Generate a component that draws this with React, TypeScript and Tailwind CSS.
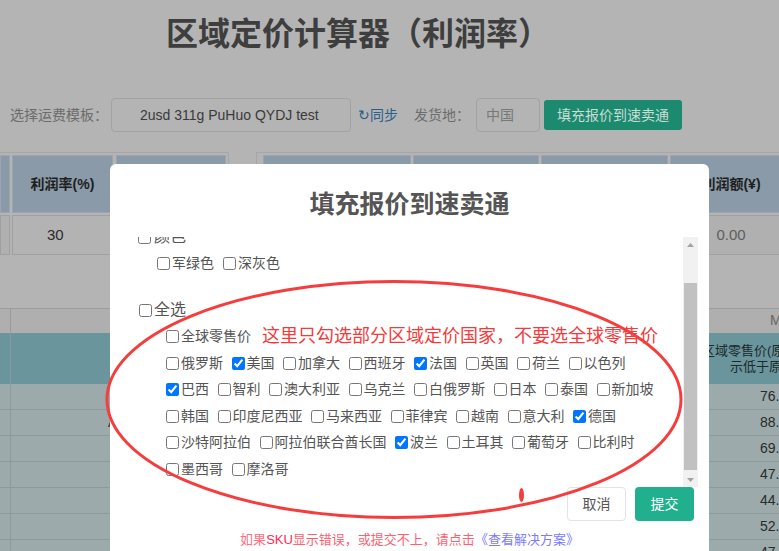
import React from "react";

type C = [string, boolean];

const rows: C[][] = [
  [["俄罗斯", false], ["美国", true], ["加拿大", false], ["西班牙", false], ["法国", true], ["英国", false], ["荷兰", false], ["以色列", false]],
  [["巴西", true], ["智利", false], ["澳大利亚", false], ["乌克兰", false], ["白俄罗斯", false], ["日本", false], ["泰国", false], ["新加坡", false]],
  [["韩国", false], ["印度尼西亚", false], ["马来西亚", false], ["菲律宾", false], ["越南", false], ["意大利", false], ["德国", true]],
  [["沙特阿拉伯", false], ["阿拉伯联合酋长国", false], ["波兰", true], ["土耳其", false], ["葡萄牙", false], ["比利时", false]],
  [["墨西哥", false], ["摩洛哥", false]],
];

const values = ["76.", "88.", "69.", "47.", "44.", "52.", "47."];

function Box({ checked }: { checked?: boolean }) {
  return <input type="checkbox" defaultChecked={checked} className="m-0 h-[13px] w-[13px] shrink-0" />;
}

function Item({ label, checked }: { label: string; checked?: boolean }) {
  return (
    <label className="flex items-center">
      <Box checked={checked} />
      <span className="ml-[2px]">{label}</span>
    </label>
  );
}

export default function App() {
  return (
    <div className="relative h-[551px] w-[779px] overflow-hidden bg-[#b4b4b4] font-['Liberation_Sans','Noto_Sans_CJK_SC',sans-serif]">
      {/* page title */}
      <div className="pl-[166px] pt-[18px] text-[32px] font-bold leading-[32px] text-[#3e3e3e]">区域定价计算器（利润率）</div>

      {/* controls */}
      <div className="mt-[48px] flex h-[34px] items-center pl-[10px] text-[14px]">
        <span className="w-[101px] text-[#6c6c6c]">选择运费模板：</span>
        <div className="flex h-[34px] w-[240px] items-center rounded-[4px] border border-[#a2a2a2] pl-[28px] text-[#3a3a3a]">2usd 311g PuHuo QYDJ test</div>
        <span className="ml-[7px] text-[#2b5d8b]">↻同步</span>
        <span className="ml-[16px] text-[#6c6c6c]">发货地：</span>
        <div className="ml-[6px] flex h-[34px] w-[64px] items-center rounded-[4px] border border-[#a2a2a2] pl-[9px] text-[#787878]">中国</div>
        <div className="ml-[4px] flex h-[30px] w-[138px] items-center justify-center rounded-[3px] bg-[#1b8a6f] text-[#c9dcd5]">填充报价到速卖通</div>
      </div>

      {/* tables */}
      <div className="mt-[20px] flex h-[104px]">
        <div className="w-[229px] shrink-0 border-r border-t border-[#a6a6a6] pt-[2px]">
          <div className="flex h-[58px]">
            <div className="w-[10px] border border-[#9ba5ae] bg-[#8a9aa8]" />
            <div className="ml-[2px] flex w-[101px] items-center justify-center border border-[#9ba5ae] bg-[#8a9aa8] text-[14px] font-bold text-[#1e1e1e]">利润率(%)</div>
            <div className="ml-[3px] w-[110px] border border-[#9ba5ae] bg-[#8a9aa8]" />
          </div>
          <div className="mt-[2px] flex h-[40px]">
            <div className="w-[10px] border border-[#a0a0a0] bg-[#b0b0b0]" />
            <div className="ml-[2px] flex w-[101px] items-center border border-[#a0a0a0] bg-[#b3b3b3] pl-[34px] text-[15px] text-[#2a2a2a]">30</div>
            <div className="ml-[3px] w-[110px] border border-[#a0a0a0] bg-[#b0b0b0]" />
          </div>
        </div>
        <div className="ml-[27px] w-[600px] shrink-0 border-l border-t border-[#a6a6a6] pl-[6px] pt-[2px]">
          <div className="flex h-[58px] gap-[2px]">
            <div className="w-[148px] border border-[#9ba5ae] bg-[#8a9aa8]" />
            <div className="w-[126px] border border-[#9ba5ae] bg-[#8a9aa8]" />
            <div className="w-[127px] border border-[#9ba5ae] bg-[#8a9aa8]" />
            <div className="flex w-[122px] items-center justify-center border border-[#9ba5ae] bg-[#8a9aa8] text-[14px] font-bold text-[#1e1e1e]">利润额(¥)</div>
          </div>
          <div className="mt-[2px] flex h-[40px] gap-[2px]">
            <div className="w-[148px] border border-[#a0a0a0] bg-[#b0b0b0]" />
            <div className="w-[126px] border border-[#a0a0a0] bg-[#b0b0b0]" />
            <div className="w-[127px] border border-[#a0a0a0] bg-[#b0b0b0]" />
            <div className="flex w-[122px] items-center justify-center border border-[#a0a0a0] bg-[#b0b0b0] text-[15px] text-[#5e5e5e]">0.00</div>
          </div>
        </div>
      </div>

      {/* lower table */}
      <div className="mt-[52px]">
        <div className="grid h-[25px] grid-cols-[10px_690px_200px] border-t border-[#9c9c9c] bg-[#afafaf]">
          <div />
          <div className="border-l border-[#999999]" />
          <div className="pl-[70px] text-[14px] leading-[22px] text-[#666666]">M</div>
        </div>
        <div className="grid h-[51px] grid-cols-[10px_690px_200px] bg-[#6a959c]">
          <div />
          <div className="border-l border-[#8a9a9c]" />
          <div className="flex flex-col justify-center text-[13px] leading-[16px] text-[#1b2a2c]">
            <span className="pl-[2px]">区域零售价(原始</span>
            <span className="pl-[30px]">示低于原价</span>
          </div>
        </div>
        {values.map((v, i) => (
          <div key={i} className="grid h-[26px] grid-cols-[10px_690px_200px] border-b border-[#8e999a] bg-[#9caaab]">
            <div />
            <div className="border-l border-[#8e999a] pl-[97px] text-[13px] leading-[25px] text-[#222222]">{i === 1 ? "A" : ""}</div>
            <div className="pl-[60px] text-[14px] leading-[25px] text-[#2a2a2a]">{v}</div>
          </div>
        ))}
      </div>

      {/* modal */}
      <div className="absolute left-[110px] top-[164px] h-[420px] w-[599px] rounded-[6px] bg-white">
        <div className="h-[73px] pt-[28px] text-center text-[25px] font-bold leading-[25px] text-[#555555]">填充报价到速卖通</div>

        <div className="ml-[20px] flex h-[250px] w-[568px]">
          <div className="flex-1 overflow-hidden text-[#555555]">
            <div className="-mt-[13px]">
              <div className="flex h-[26px] items-center pl-[8px] text-[16px]">
                <Box />
                <span className="ml-[3px]">颜色</span>
              </div>
              <div className="flex h-[26px] items-center gap-x-[9px] pl-[27px] text-[14px]">
                <Item label="军绿色" />
                <Item label="深灰色" />
              </div>
              <div className="mt-[21px] flex h-[26.5px] items-center pl-[9px] text-[16px]">
                <Box />
                <span className="ml-[2px]">全选</span>
              </div>
              <div className="flex h-[26.5px] items-center pl-[36px] text-[14px]">
                <Item label="全球零售价" />
                <span className="ml-[11px] text-[18px] text-[#f23b3b]">这里只勾选部分区域定价国家，不要选全球零售价</span>
              </div>
              {rows.map((r, i) => (
                <div key={i} className="flex h-[26.5px] items-center gap-x-[8.5px] pl-[36px] text-[14px]">
                  {r.map(([l, c]) => (
                    <Item key={l} label={l} checked={c} />
                  ))}
                </div>
              ))}
            </div>
          </div>
          {/* scrollbar */}
          <div className="flex w-[15px] flex-col bg-[#f1f1f1]">
            <div className="flex h-[16px] items-center justify-center">
              <svg width="7" height="4" viewBox="0 0 7 4"><path d="M3.5 0L7 4H0z" fill="#a3a3a3" /></svg>
            </div>
            <div className="h-[30px]" />
            <div className="mx-[1px] h-[187px] bg-[#c1c1c1]" />
            <div className="flex-1" />
            <div className="flex h-[15px] items-center justify-center">
              <svg width="7" height="4" viewBox="0 0 7 4"><path d="M0 0H7L3.5 4z" fill="#a3a3a3" /></svg>
            </div>
          </div>
        </div>

        <div className="flex justify-end gap-[9px] pr-[15px]">
          <div className="flex h-[34px] w-[59px] items-center justify-center rounded-[4px] border border-[#e3e3e3] bg-white text-[14px] text-[#555555]">取消</div>
          <div className="flex h-[34px] w-[59px] items-center justify-center rounded-[4px] bg-[#21b08e] text-[14px] text-white">提交</div>
        </div>

        <div className="mt-[10px] text-center text-[13px] leading-[18px]">
          <span className="text-[#ff7083]">如果</span>
          <span className="text-[#ff2a55]">SKU</span>
          <span className="text-[#ff5f70]">显示错误，或提交不上，请点击</span>
          <span className="text-[#7b7bff]">《查看解决方案》</span>
        </div>
      </div>

      {/* red annotation */}
      <svg className="pointer-events-none absolute left-0 top-0" width="779" height="551" viewBox="0 0 779 551">
        <ellipse cx="394" cy="399.5" rx="287" ry="118" fill="none" stroke="#f63d3d" strokeWidth="3" />
        <ellipse cx="521.5" cy="495" rx="2.5" ry="7" fill="#f63d3d" />
      </svg>
    </div>
  );
}
